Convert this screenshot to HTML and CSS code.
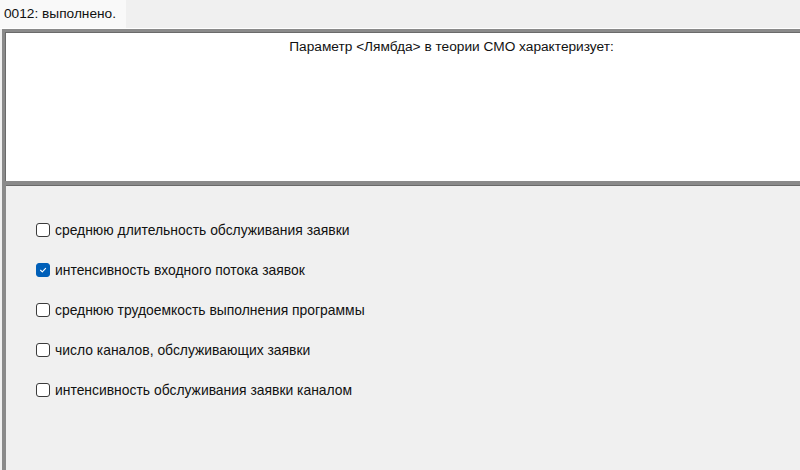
FILE: index.html
```html
<!DOCTYPE html>
<html lang="ru">
<head>
<meta charset="utf-8">
<link rel="stylesheet" href="styles.css">
</head>
<body>
<div class="page">
  <div class="tabs">
    <div class="tab">0012: выполнено.</div>
  </div>
  <div class="question">
    <div class="qtext">Параметр &lt;Лямбда&gt; в теории СМО характеризует:</div>
  </div>
  <div class="answers">
    <label class="opt"><span class="box"></span><span>среднюю длительность обслуживания заявки</span></label>
    <label class="opt"><span class="box checked"><svg viewBox="0 0 14 14" width="14" height="14"><path d="M4.2 7.3 L6.2 9.2 L10 5.2" fill="none" stroke="#fff" stroke-width="1.3" stroke-linecap="round" stroke-linejoin="round"/></svg></span><span>интенсивность входного потока заявок</span></label>
    <label class="opt"><span class="box"></span><span>среднюю трудоемкость выполнения программы</span></label>
    <label class="opt"><span class="box"></span><span>число каналов, обслуживающих заявки</span></label>
    <label class="opt"><span class="box"></span><span>интенсивность обслуживания заявки каналом</span></label>
  </div>
</div>
</body>
</html>
```

FILE: styles.css
```css
html, body {
  margin: 0;
  padding: 0;
  background: #f0f0f0;
  overflow: hidden;
}
.page {
  width: 800px;
  height: 470px;
  display: flex;
  flex-direction: column;
  font-family: "Liberation Sans", Arial, sans-serif;
  font-size: 13.7px;
  color: #111;
}
.tabs {
  height: 28px;
  display: flex;
  align-items: flex-end;
  border-bottom: 1px solid #ffffff;
}
.tab {
  width: 122px;
  height: 28px;
  padding-left: 4px;
  background: #f9f9f9;
  display: flex;
  align-items: center;
  line-height: 16px;
  white-space: nowrap;
}
.question {
  height: 149px;
  margin-left: 2px;
  background: #fff;
  border-top: 3px solid #8a8a8a;
  border-left: 3px solid #8a8a8a;
  box-shadow: inset 1px 1px 0 #6a6a6a;
}
.qtext {
  text-align: center;
  padding-top: 7px;
  padding-left: 98px;
  white-space: nowrap;
  line-height: 16px;
}
.answers {
  flex: 1;
  margin-left: 2px;
  border-top: 4px solid #8a8a8a;
  border-left: 4px solid #8a8a8a;
  box-shadow: inset 0 1px 0 #6a6a6a;
  padding: 38px 0 0 30px;
  display: flex;
  flex-direction: column;
  gap: 26px;
  font-size: 13.9px;
}
.opt {
  display: flex;
  align-items: center;
  gap: 5px;
  height: 14px;
  line-height: 16px;
  white-space: nowrap;
}
.box {
  width: 12px;
  height: 12px;
  border: 1px solid #3a3a3a;
  border-radius: 3px;
  background: #fff;
  display: flex;
  align-items: center;
  justify-content: center;
  flex: none;
}
.box.checked {
  background: #005fb8;
  border-color: #005fb8;
}
.box svg {
  display: block;
}
```
